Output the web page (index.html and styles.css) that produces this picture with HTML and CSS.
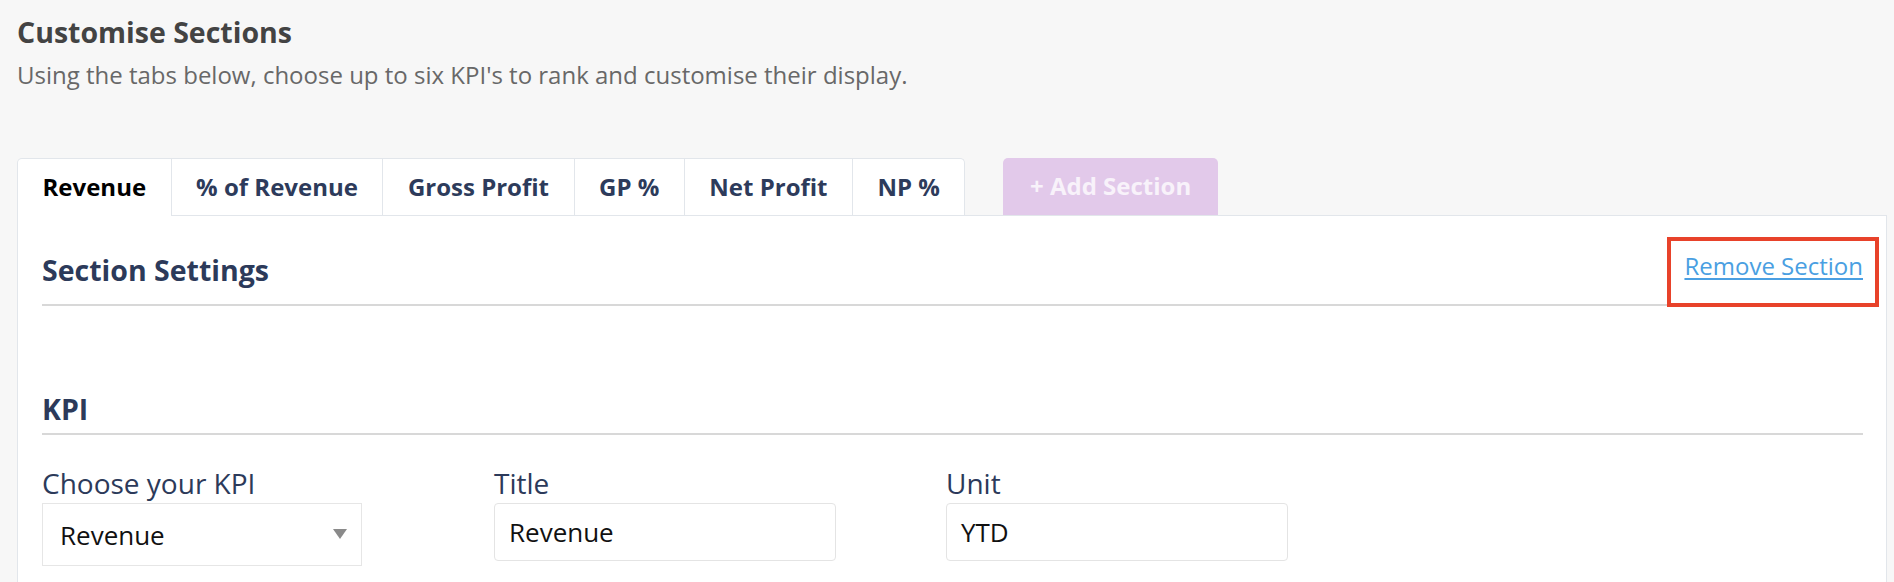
FILE: index.html
```html
<!DOCTYPE html>
<html lang="en">
<head>
<meta charset="utf-8">
<title>Customise Sections</title>
<link rel="stylesheet" href="styles.css">
</head>
<body>
<div class="page">
  <h1 class="title">Customise Sections</h1>
  <p class="subtitle">Using the tabs below, choose up to six KPI's to rank and customise their display.</p>

  <div class="tabs">
    <div class="tab-group">
      <div class="tab active">Revenue</div>
      <div class="tab">% of Revenue</div>
      <div class="tab">Gross Profit</div>
      <div class="tab">GP %</div>
      <div class="tab">Net Profit</div>
      <div class="tab">NP %</div>
    </div>
    <div class="add-btn">+ Add Section</div>
  </div>

  <div class="card">
    <div class="card-head">
      <h2 class="heading">Section Settings</h2>
      <span class="remove-wrap"><a class="remove-link" href="#">Remove Section</a></span>
    </div>

    <h3 class="heading kpi">KPI</h3>

    <div class="fields">
      <div class="field">
        <div class="label">Choose your KPI</div>
        <div class="select">Revenue<span class="caret"></span></div>
      </div>
      <div class="field">
        <div class="label">Title</div>
        <div class="input">Revenue</div>
      </div>
      <div class="field">
        <div class="label">Unit</div>
        <div class="input">YTD</div>
      </div>
    </div>
  </div>
</div>
</body>
</html>
```

FILE: styles.css
```css
* { box-sizing: border-box; }

html, body {
  margin: 0;
  padding: 0;
  background: #f7f7f7;
  font-family: "Open Sans", "Noto Sans", sans-serif;
}

.page {
  padding: 0 7px 0 17px;
}

.title {
  margin: 13px 0 0;
  font-size: 28.5px;
  line-height: 38px;
  font-weight: 700;
  color: #434343;
}

.subtitle {
  margin: 8px 0 0;
  font-size: 24px;
  line-height: 32px;
  color: #686868;
}

.tabs {
  display: flex;
  align-items: flex-start;
  margin-top: 67px;
  margin-bottom: -1px;
  position: relative;
  z-index: 1;
}

.tab-group {
  display: flex;
  background: #fff;
  border: 1px solid #e2e6eb;
  border-bottom: none;
  border-radius: 5px 5px 0 0;
}

.tab {
  padding: 12px 24.5px;
  font-size: 24px;
  line-height: 32px;
  font-weight: 700;
  color: #2d3b5b;
  border-left: 1px solid #e2e6eb;
  border-bottom: 1px solid #e2e6eb;
}

.tab:first-child {
  border-left: none;
  border-top-left-radius: 5px;
}

.tab:last-child {
  border-top-right-radius: 5px;
}

.tab.active {
  color: #000;
  border-bottom-color: #fff;
}

.add-btn {
  margin-left: 38px;
  padding: 12px 26.5px 13px;
  font-size: 24px;
  line-height: 32px;
  font-weight: 700;
  color: #f8f2fa;
  background: #e2c9ea;
  border-radius: 5px 5px 0 0;
}

.card {
  background: #fff;
  border: 1px solid #e2e6eb;
  padding: 36px 23px 60px 24px;
}

.card-head {
  display: flex;
  justify-content: space-between;
  align-items: flex-start;
  padding-bottom: 16px;
  border-bottom: 2px solid #d8d8d8;
}

.heading {
  margin: 0;
  font-size: 28.5px;
  line-height: 36px;
  font-weight: 700;
  color: #2c3a5a;
}

.remove-wrap {
  position: relative;
  margin-top: -2px;
}

.remove-wrap::after {
  content: "";
  position: absolute;
  top: -13px;
  right: -16px;
  bottom: -25px;
  left: -17px;
  border: 4px solid #e8422a;
  pointer-events: none;
}

.remove-link {
  display: block;
  font-size: 24px;
  line-height: 32px;
  color: #4a9fe2;
  text-decoration: underline;
  text-underline-offset: 3px;
}

.kpi {
  margin-top: 85px;
  padding-bottom: 6px;
  border-bottom: 2px solid #d8d8d8;
}

.fields {
  display: grid;
  grid-template-columns: 452px 452px 452px;
  align-items: start;
  margin-top: 30px;
}

.label {
  font-size: 28px;
  line-height: 36px;
  color: #2c3a5a;
  margin-bottom: 2px;
}

.select {
  position: relative;
  display: flex;
  align-items: center;
  width: 320px;
  height: 63px;
  padding: 0 17px;
  border: 1px solid #e6e6e6;
  font-size: 26px;
  color: #111;
}

.caret {
  position: absolute;
  right: 14px;
  top: 25px;
  width: 0;
  height: 0;
  border-left: 7px solid transparent;
  border-right: 7px solid transparent;
  border-top: 10px solid #8a8a8a;
}

.input {
  display: flex;
  align-items: center;
  width: 342px;
  height: 58px;
  margin-top: 1px;
  padding: 0 14px;
  border: 1px solid #e4e4e4;
  border-radius: 4px;
  font-size: 26px;
  color: #111;
}
```
